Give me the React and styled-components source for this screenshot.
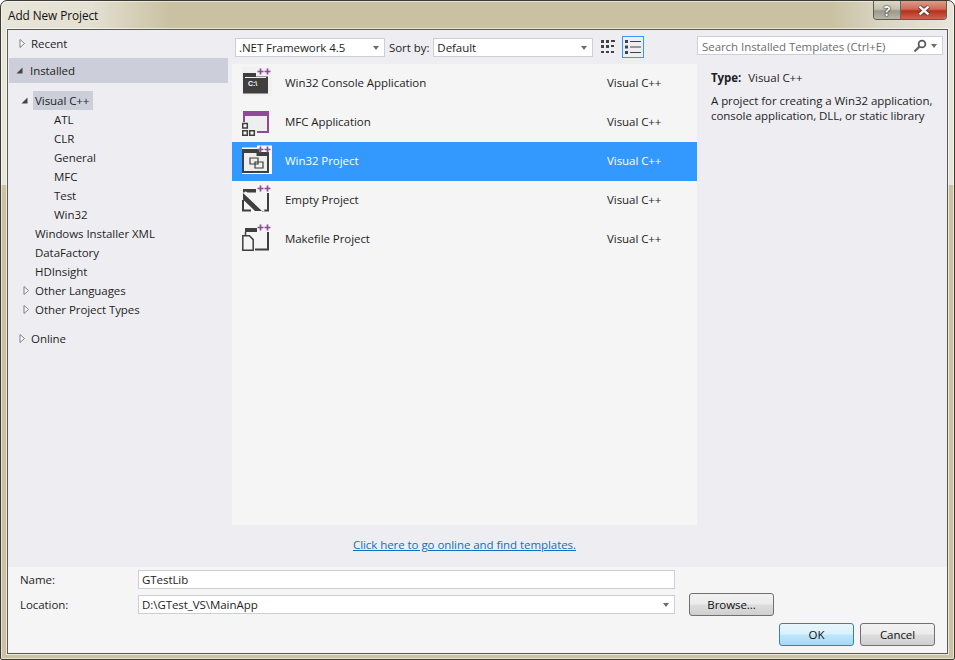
import React from "react";
import styled, { createGlobalStyle } from "styled-components";

const Global = createGlobalStyle`
  html, body {
    margin: 0;
    background: #fff;
  }
  * {
    box-sizing: border-box;
  }
  body {
    font-family: "Open Sans", "Liberation Sans", sans-serif;
    font-size: 11.5px;
    letter-spacing: -0.06px;
    color: #1e1e1e;
  }
`;

const Window = styled.div`
  width: 955px;
  height: 660px;
  display: flex;
  flex-direction: column;
  padding: 0 6px 5px;
  border: 1px solid #3b3a33;
  border-radius: 7px 7px 2px 2px;
  overflow: hidden;
  box-shadow: inset 0 0 0 1px rgba(255, 255, 255, 0.55);
  background:
    linear-gradient(to right, #e8e5da, #e4e0d2 90px, #c9c1a1 170px, #c9c1a1 830px, #dad5c3 880px, #e8e5da) top / 100% 184px no-repeat,
    #cac2a2;
`;

const TitleBar = styled.div`
  height: 28px;
  flex: none;
  display: flex;
  justify-content: space-between;
  margin: 0 -6px;
  padding: 0 7px;
`;

const Title = styled.div`
  font-size: 11.8px;
  line-height: 29px;
  color: #111;
`;

const Caption = styled.div`
  display: flex;
  height: 19px;
  border: 1px solid #5f5c50;
  border-top: none;
  border-radius: 0 0 4px 4px;
  overflow: hidden;
`;

const CaptionButton = styled.div`
  width: ${(p) => p.$w}px;
  display: flex;
  align-items: center;
  justify-content: center;
  font-size: 14px;
  font-weight: 700;
  color: #f4f4f4;
  text-shadow: 0 0 2px #222, 0 0 1px #222;
  background: ${(p) =>
    p.$close
      ? "linear-gradient(#dd9b8c, #cf6a58 45%, #b5301c 55%, #cf6450)"
      : "linear-gradient(#dcd8c8, #c3c0b0 45%, #9b998b 55%, #b9b6a6)"};
  & + & {
    border-left: 1px solid #6a675a;
  }
`;

const Client = styled.div`
  flex: 1;
  display: flex;
  flex-direction: column;
  border: 1px solid #5a5a52;
  box-shadow: 0 0 0 1px rgba(255, 255, 255, 0.6);
  min-height: 0;
`;

const Main = styled.div`
  height: 537px;
  display: flex;
  background: #eeeef2;
`;

const Left = styled.div`
  width: 224px;
  flex: none;
  padding-top: 4px;
`;

const TreeRow = styled.div`
  display: flex;
  align-items: center;
  height: ${(p) => p.$h || 19}px;
  margin-top: ${(p) => p.$mt || 0}px;
  margin-left: ${(p) => p.$ml || 0}px;
  margin-right: ${(p) => p.$mr || 0}px;
  padding-left: ${(p) => p.$pl || 0}px;
  background: ${(p) => (p.$band ? "#ccceda" : "transparent")};
`;

const CaretBox = styled.span`
  width: 7px;
  height: 9px;
  flex: none;
  display: flex;
  margin-right: ${(p) => p.$gap}px;
`;

const Chip = styled.span`
  padding: 0 4px 0 2px;
  line-height: 19px;
  background: #ccceda;
  margin-left: -2px;
`;

const Center = styled.div`
  width: 465px;
  flex: none;
  display: flex;
  flex-direction: column;
`;

const Toolbar = styled.div`
  height: 34px;
  flex: none;
  display: flex;
  align-items: flex-start;
  padding: 8px 0 0 3px;
`;

const Combo = styled.div`
  width: ${(p) => p.$w}px;
  height: 19px;
  flex: none;
  display: flex;
  align-items: center;
  justify-content: space-between;
  padding: 0 5px 0 3px;
  background: #fff;
  border: 1px solid #ccceda;
`;

const Arrow = styled.span`
  width: 0;
  height: 0;
  border-left: 3.5px solid transparent;
  border-right: 3.5px solid transparent;
  border-top: 4px solid #6d6d70;
`;

const SortLabel = styled.span`
  margin: 0 4px;
  line-height: 19px;
`;

const ViewToggle = styled.div`
  width: 22px;
  height: 22px;
  display: flex;
  align-items: center;
  justify-content: center;
  flex: none;
  margin: -2px 0 0 ${(p) => p.$ml}px;
  border: 1px solid ${(p) => (p.$on ? "#3399ff" : "transparent")};
`;

const List = styled.div`
  height: 461px;
  flex: none;
  background: #f5f5f5;
`;

const Item = styled.div`
  height: 39px;
  display: flex;
  align-items: center;
  padding-left: 10px;
  color: ${(p) => (p.$on ? "#fff" : "#1e1e1e")};
  background: ${(p) => (p.$on ? "#3399ff" : "transparent")};
`;

const ItemIcon = styled.svg`
  width: 30px;
  height: 39px;
  flex: none;
  margin-right: 13px;
`;

const ItemName = styled.span`
  width: 322px;
  flex: none;
  margin-bottom: 2px;
`;

const ItemKind = styled.span`
  margin-bottom: 2px;
`;

const LinkRow = styled.div`
  flex: 1;
  display: flex;
  align-items: center;
  justify-content: center;
  padding-bottom: 4px;
`;

const OnlineLink = styled.a`
  color: #0e70c0;
  text-decoration: underline;
`;

const Right = styled.div`
  flex: 1;
  padding-top: 6px;
`;

const Search = styled.div`
  width: 246px;
  height: 19px;
  display: flex;
  align-items: center;
  justify-content: space-between;
  padding: 1px 5px 0 4px;
  background: #fff;
  border: 1px solid #ccceda;
  color: #6d6d70;
`;

const SearchEnd = styled.span`
  display: flex;
  align-items: center;
  gap: 4px;
`;

const Info = styled.div`
  padding: 15px 8px 0 14px;
`;

const TypeLine = styled.div`
  display: flex;
  gap: 7px;
  line-height: 16px;
  margin-bottom: 7px;
`;

const Bold = styled.b`
  font-weight: 700;
`;

const Desc = styled.div`
  line-height: 15px;
`;

const Footer = styled.div`
  flex: 1;
  padding: 3px 12px 0;
  background: #f5f5f5;
`;

const FieldRow = styled.div`
  height: 19px;
  display: flex;
  align-items: center;
  margin-top: ${(p) => p.$mt || 0}px;
`;

const FieldLabel = styled.span`
  width: 118px;
  flex: none;
`;

const Push = styled.div`
  height: 23px;
  display: flex;
  align-items: center;
  justify-content: center;
  flex: none;
  width: ${(p) => p.$w}px;
  margin: ${(p) => p.$m || 0};
  color: #111;
  border: 1px solid ${(p) => (p.$primary ? "#3c7fb1" : "#707070")};
  border-radius: 3px;
  background: ${(p) =>
    p.$primary
      ? "linear-gradient(#eaf6fd, #d9f0fc 48%, #bee6fd 52%, #a7d9f5)"
      : "linear-gradient(#f2f2f2, #ebebeb 48%, #dddddd 52%, #cfcfcf)"};
`;

const Actions = styled.div`
  display: flex;
  justify-content: flex-end;
  gap: 6px;
  margin-top: 9px;
`;

const PURPLE = "#8e4a96";
const DARK = "#3f3f3f";

const Plus = () => (
  <path d="M15.5 7.5h6M18.5 4.5v6M22.5 7.5h6M25.5 4.5v6" stroke={PURPLE} strokeWidth="1.7" fill="none" />
);

const ConsoleIcon = () => (
  <ItemIcon viewBox="0 0 30 39">
    <rect x="-1" y="3" width="31" height="29" fill="#f1f1f1" />
    <path d="M1 9h13v3.5h12V29.5H1z" fill={DARK} />
    <path d="M3 13.5h21" stroke="#f1f1f1" />
    <text x="6" y="22" fontSize="7" fontWeight="700" fill="#fff" fontFamily="Liberation Sans, sans-serif">C:\</text>
    <Plus />
  </ItemIcon>
);

const MfcIcon = () => (
  <ItemIcon viewBox="0 0 30 39">
    <path d="M1 8h26v22H1z" fill="#eeeeee" />
    <path d="M1 8h26v22H15v-2h10V13H3v6H1z" fill={PURPLE} />
    <path d="M.7 20.5h4.6v4.6H.7zM.7 27.7h4.6v4.6H.7zM7.7 27.7h4.6v4.6H7.7z" fill="#f5f5f5" stroke={DARK} strokeWidth="1.5" />
  </ItemIcon>
);

const ProjectIcon = () => (
  <ItemIcon viewBox="0 0 30 39">
    <path d="M-1 5.5h16v-2h15v28.5H-1z" fill="#fff" />
    <path d="M1 8h15v3h10v19H1z" fill="#eeeeee" stroke={DARK} strokeWidth="2" />
    <path d="M1 9.5h15v3h10" fill="none" stroke={DARK} strokeWidth="3" />
    <path d="M8 16h8v6H8zM13 20h8v6h-8z" fill="#eeeeee" stroke={DARK} strokeWidth="1.2" />
    <Plus />
  </ItemIcon>
);

const EmptyIcon = () => (
  <ItemIcon viewBox="0 0 30 39">
    <path d="M1 8h13v3.5H1z" fill={DARK} />
    <path d="M26 12v17.5H20M1 19v10.5h8" fill="none" stroke={DARK} strokeWidth="2" />
    <path d="M1 12L20 30H13L1 18.5z" fill={DARK} />
    <path d="M3 11L22 30" stroke="#f5f5f5" strokeWidth="2.2" />
    <Plus />
  </ItemIcon>
);

const MakefileIcon = () => (
  <ItemIcon viewBox="0 0 30 39">
    <path d="M3 8h12v4H3z" fill={DARK} />
    <path d="M26 12v17.5H13" fill="none" stroke={DARK} strokeWidth="2" />
    <path d="M3.5 12v3" stroke={DARK} strokeWidth="1.5" />
    <path d="M.8 15.8h6.6l3.8 3.8v10.6H.8z" fill="#f5f5f5" stroke={DARK} strokeWidth="1.5" />
    <Plus />
  </ItemIcon>
);

const Caret = ({ open, gap }) => (
  <CaretBox $gap={gap}>
    <svg width="7" height="9" viewBox="0 0 7 9">
      {open ? (
        <path d="M6.5 1.5v6h-6z" fill="#444" />
      ) : (
        <path d="M1 .5l4.5 4-4.5 4z" fill="#fff" stroke="#7f7f7f" />
      )}
    </svg>
  </CaretBox>
);

const GridViewIcon = () => (
  <svg width="14" height="14" viewBox="0 0 14 14" fill="#424242">
    <path d="M0 0h3v3H0zM5 0h3v3H5zM10 0h4v2h-4zM0 5h3v3H0zM5 5h3v3H5zM10 5h3v2h-3zM0 11h3v2H0zM5 11h3v2H5zM10 11h3v2h-3z" />
  </svg>
);

const ListViewIcon = () => (
  <svg width="16" height="16" viewBox="0 0 16 16">
    <path d="M0 1h3v3H0zM0 6.5h3v3H0zM0 12h3v3H0z" fill="#424242" />
    <path d="M5 2.5h11M5 8h11M5 13.5h11" stroke="#424242" />
  </svg>
);

const SearchIcon = () => (
  <svg width="14" height="14" viewBox="0 0 14 14">
    <circle cx="9" cy="5" r="3.4" fill="none" stroke="#555" strokeWidth="1.7" />
    <path d="M6.4 7.6L1.5 12.5" stroke="#666" strokeWidth="2.2" />
  </svg>
);

const CloseGlyph = () => (
  <svg width="14" height="11" viewBox="0 0 14 11">
    <path d="M2.5 1.5l9 8M11.5 1.5l-9 8" stroke="#4a2018" strokeWidth="4" />
    <path d="M2.5 1.5l9 8M11.5 1.5l-9 8" stroke="#f4f4f4" strokeWidth="2.4" />
  </svg>
);

const subItems = ["ATL", "CLR", "General", "MFC", "Test", "Win32"];
const siblings = ["Windows Installer XML", "DataFactory", "HDInsight"];

const templates = [
  { name: "Win32 Console Application", Icon: ConsoleIcon },
  { name: "MFC Application", Icon: MfcIcon },
  { name: "Win32 Project", Icon: ProjectIcon, on: true },
  { name: "Empty Project", Icon: EmptyIcon },
  { name: "Makefile Project", Icon: MakefileIcon },
];

export default function App() {
  return (
    <>
      <Global />
      <Window>
        <TitleBar>
          <Title>Add New Project</Title>
          <Caption>
            <CaptionButton $w={26}>?</CaptionButton>
            <CaptionButton $w={46} $close>
              <CloseGlyph />
            </CaptionButton>
          </Caption>
        </TitleBar>
        <Client>
          <Main>
            <Left>
              <TreeRow $h={18} $pl={11}>
                <Caret gap={5} />
                Recent
              </TreeRow>
              <TreeRow $h={25} $mt={6} $ml={1} $mr={4} $pl={7} $band>
                <Caret open gap={7} />
                Installed
              </TreeRow>
              <TreeRow $mt={8} $pl={13}>
                <Caret open gap={7} />
                <Chip>Visual C++</Chip>
              </TreeRow>
              {subItems.map((s) => (
                <TreeRow key={s} $pl={46}>{s}</TreeRow>
              ))}
              {siblings.map((s) => (
                <TreeRow key={s} $pl={27}>{s}</TreeRow>
              ))}
              <TreeRow $pl={15}>
                <Caret gap={5} />
                Other Languages
              </TreeRow>
              <TreeRow $pl={15}>
                <Caret gap={5} />
                Other Project Types
              </TreeRow>
              <TreeRow $mt={10} $pl={11}>
                <Caret gap={5} />
                Online
              </TreeRow>
            </Left>
            <Center>
              <Toolbar>
                <Combo $w={150}>
                  .NET Framework 4.5
                  <Arrow />
                </Combo>
                <SortLabel>Sort by:</SortLabel>
                <Combo $w={160}>
                  Default
                  <Arrow />
                </Combo>
                <ViewToggle $ml={4}>
                  <GridViewIcon />
                </ViewToggle>
                <ViewToggle $ml={3} $on>
                  <ListViewIcon />
                </ViewToggle>
              </Toolbar>
              <List>
                {templates.map(({ name, Icon, on }) => (
                  <Item key={name} $on={on}>
                    <Icon />
                    <ItemName>{name}</ItemName>
                    <ItemKind>Visual C++</ItemKind>
                  </Item>
                ))}
              </List>
              <LinkRow>
                <OnlineLink>Click here to go online and find templates.</OnlineLink>
              </LinkRow>
            </Center>
            <Right>
              <Search>
                Search Installed Templates (Ctrl+E)
                <SearchEnd>
                  <SearchIcon />
                  <Arrow />
                </SearchEnd>
              </Search>
              <Info>
                <TypeLine>
                  <Bold>Type:</Bold>
                  <span>Visual C++</span>
                </TypeLine>
                <Desc>
                  A project for creating a Win32 application,
                  <br />
                  console application, DLL, or static library
                </Desc>
              </Info>
            </Right>
          </Main>
          <Footer>
            <FieldRow>
              <FieldLabel>Name:</FieldLabel>
              <Combo $w={537}>GTestLib</Combo>
            </FieldRow>
            <FieldRow $mt={6}>
              <FieldLabel>Location:</FieldLabel>
              <Combo $w={537}>
                D:\GTest_VS\MainApp
                <Arrow />
              </Combo>
              <Push $w={85} $m="0 0 0 14px">Browse...</Push>
            </FieldRow>
            <Actions>
              <Push $w={75} $primary>OK</Push>
              <Push $w={75}>Cancel</Push>
            </Actions>
          </Footer>
        </Client>
      </Window>
    </>
  );
}
